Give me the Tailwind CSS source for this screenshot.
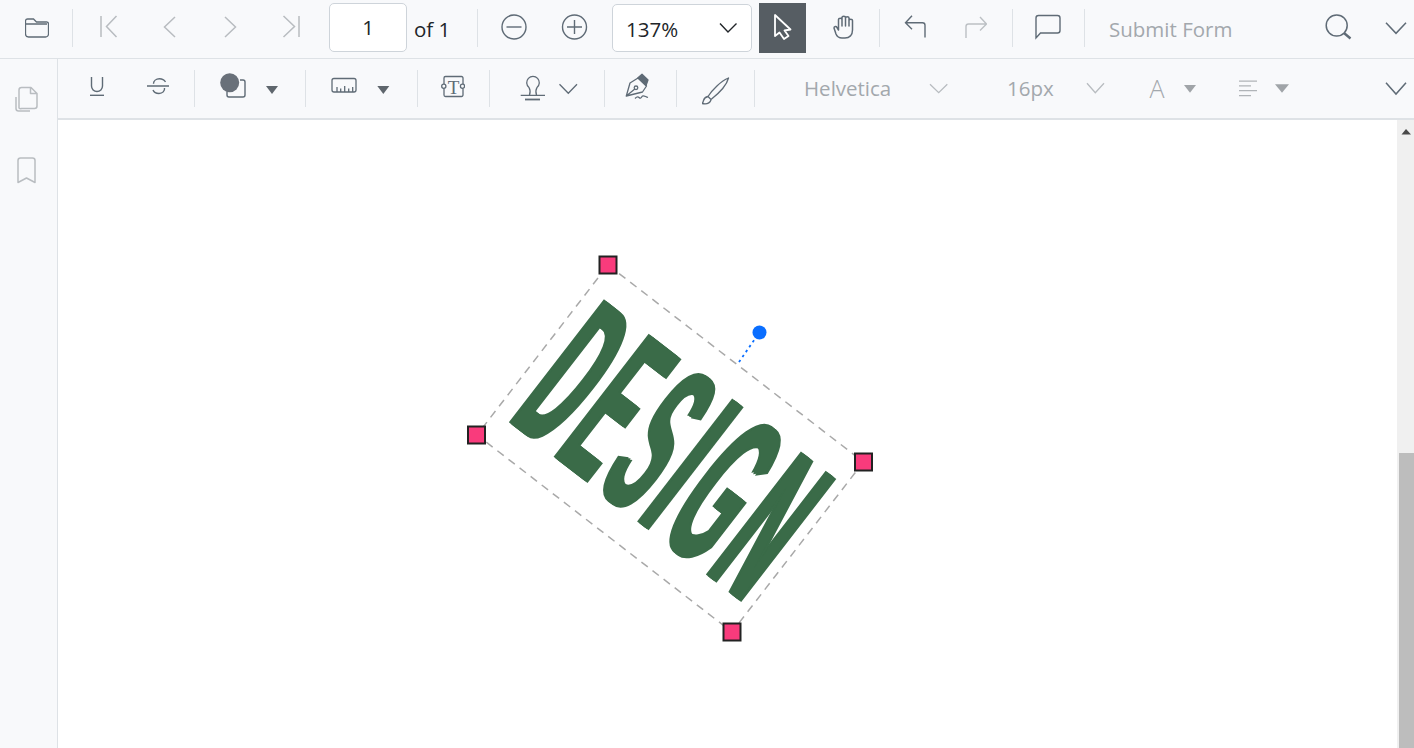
<!doctype html>
<html>
<head>
<meta charset="utf-8">
<script src="https://cdn.jsdelivr.net/npm/@tailwindcss/browser@4"></script>
</head>
<body class="bg-white">
<div class="w-[1414px] h-[748px] overflow-hidden flex flex-col font-['Open_Sans','Noto_Sans',sans-serif] text-[#212529]">
  <!-- top toolbar -->
  <div class="h-[59px] shrink-0 flex items-start bg-[#f8f9fb] border-b border-[#dee2e6] text-[20.5px]">
    <svg class="shrink-0 h-[58px] w-[24px] ml-[25px]" viewBox="25 0 24 58" fill="none" stroke="#5f6b76" stroke-width="1.3"><path d="M25.5 21 a2 2 0 0 1 2-2 h6 l3 3 h9.5 a2 2 0 0 1 2.5 2 v10 a3 3 0 0 1-3 3 h-17 a3 3 0 0 1-3-3 z M26 24 h21"/></svg>
    <div class="shrink-0 w-px h-[38px] mt-[9px] ml-[23px] bg-[#dee2e6]"></div>
    <svg class="shrink-0 h-[58px] w-[20px] ml-[27px]" viewBox="100 0 20 58" fill="none" stroke="#b8bcc0" stroke-width="1.5"><path d="M101 16 V37 M116.5 16 L106.5 26.5 L116.5 37"/></svg>
    <svg class="shrink-0 h-[58px] w-[16px] ml-[42px]" viewBox="162 0 16 58" fill="none" stroke="#b8bcc0" stroke-width="1.5"><path d="M175 17 L164.5 27 L175 37"/></svg>
    <svg class="shrink-0 h-[58px] w-[16px] ml-[44px]" viewBox="222 0 16 58" fill="none" stroke="#b8bcc0" stroke-width="1.5"><path d="M225 17 L235.5 27 L225 37"/></svg>
    <svg class="shrink-0 h-[58px] w-[18px] ml-[44px]" viewBox="282 0 18 58" fill="none" stroke="#b8bcc0" stroke-width="1.5"><path d="M299 16 V37 M283.5 16 L294.5 26.5 L283.5 37"/></svg>
    <div class="shrink-0 w-[78px] h-[49px] mt-[3px] ml-[29px] bg-white border border-[#ced4da] rounded-[5px] flex items-center justify-center">1</div>
    <div class="shrink-0 w-[37px] ml-[7px] mt-[3px] h-[49px] leading-[52px] whitespace-nowrap">of 1</div>
    <div class="shrink-0 w-px h-[38px] mt-[9px] ml-[26px] bg-[#dee2e6]"></div>
    <svg class="shrink-0 h-[58px] w-[28px] ml-[22px]" viewBox="500 0 28 58" fill="none" stroke="#5f6b76" stroke-width="1.4"><circle cx="514" cy="27" r="12"/><path d="M506.5 27 H521.5"/></svg>
    <svg class="shrink-0 h-[58px] w-[28px] ml-[32px]" viewBox="560 0 28 58" fill="none" stroke="#5f6b76" stroke-width="1.4"><circle cx="574.5" cy="27" r="12"/><path d="M567 27 H582 M574.5 20 V34"/></svg>
    <div class="shrink-0 w-[140px] h-[48px] mt-[4px] ml-[24px] bg-white border border-[#ced4da] rounded-[5px] pl-[13px] leading-[48px] relative">137%
      <svg class="absolute right-[14px] top-[17px] w-[18px] h-[12px]" viewBox="718 20 18 12" fill="none" stroke="#212529" stroke-width="1.4"><path d="M719 21.5 L727 30 L735.5 21.5"/></svg>
    </div>
    <div class="shrink-0 w-[47px] h-[50px] mt-[3px] ml-[7px] bg-[#565d63] flex items-center justify-center">
      <svg class="w-[24px] h-[30px]" viewBox="771 13 24 30" fill="#565d63" stroke="#fff" stroke-width="1.8" stroke-linejoin="round"><path d="M775 15 V36 L779.5 32.5 L784 39 L788.5 36 L784.5 30.5 L790.5 29.5 Z"/></svg>
    </div>
    <svg class="shrink-0 h-[58px] w-[24px] ml-[26px]" viewBox="832 0 24 58" fill="none" stroke="#5f6b76" stroke-width="1.5" stroke-linejoin="round"><path d="M834 28 c0-1.6 2.4-2 3-.5 l1.5 2.5 V19.500 c0-1.800 3.500-1.800 3.500 0 V26 V17.500 c0-1.800 3.500-1.800 3.500 0 V26 V18 c0-1.800 3.500-1.800 3.500 0 V26 V20.500 c0-1.800 3.500-1.800 3.500 0 V30 c0 5-3 8-7.500 8 h-3 c-3 0-5-1.500-6-4 z"/></svg>
    <div class="shrink-0 w-px h-[38px] mt-[9px] ml-[23px] bg-[#dee2e6]"></div>
    <svg class="shrink-0 h-[58px] w-[22px] ml-[24px]" viewBox="904 0 22 58" fill="none" stroke="#5f6b76" stroke-width="1.4"><path d="M912 15.700 L905.500 22.700 L912 29.300 M905.500 22.700 H922.500 a2.500 2.500 0 0 1 2.500 2.500 V37.500"/></svg>
    <svg class="shrink-0 h-[58px] w-[22px] ml-[39px]" viewBox="965 0 22 58" fill="none" stroke="#bcc0c4" stroke-width="1.4"><path d="M980 17 L986.500 24 L980 30.500 M986.500 24 H968.500 a2.500 2.500 0 0 0 -2.500 2.500 V38"/></svg>
    <div class="shrink-0 w-px h-[38px] mt-[9px] ml-[25px] bg-[#dee2e6]"></div>
    <svg class="shrink-0 h-[58px] w-[26px] ml-[22px]" viewBox="1035 0 26 58" fill="none" stroke="#5f6b76" stroke-width="1.4"><path d="M1036 38 V18 a2.500 2.500 0 0 1 2.500-2.500 h19 a2.500 2.500 0 0 1 2.500 2.500 v12.500 a2.500 2.500 0 0 1-2.500 2.500 h-17 z"/></svg>
    <div class="shrink-0 w-px h-[38px] mt-[9px] ml-[23px] bg-[#dee2e6]"></div>
    <div class="shrink-0 w-[124px] ml-[24px] mt-[3px] h-[49px] leading-[52px] text-[#a3a8ad] whitespace-nowrap">Submit Form</div>
    <svg class="shrink-0 h-[58px] w-[27px] ml-[92px]" viewBox="1325 0 27 58" fill="none" stroke="#5f6b76" stroke-width="1.5"><circle cx="1336.700" cy="25.500" r="10.500"/><path d="M1344 33 L1350.500 38.500" stroke-width="2.400"/></svg>
    <svg class="shrink-0 h-[58px] w-[22px] ml-[33px]" viewBox="1385 0 22 58" fill="none" stroke="#5f6b76" stroke-width="1.5"><path d="M1386 22.700 L1396 33.300 L1406 22.700"/></svg>
  </div>

  <div class="flex-1 flex min-h-0">
    <!-- sidebar -->
    <div class="w-[58px] shrink-0 bg-[#f8f9fb] border-r border-[#dee2e6] flex flex-col">
      <svg class="w-[57px] h-[130px]" viewBox="0 59 57 130" fill="none" stroke="#b9bdc1" stroke-width="1.5" stroke-linejoin="round">
        <path d="M19 108 V90 a2.500 2.500 0 0 1 2.500-2.500 h9.500 l6 6 V106 a2.500 2.500 0 0 1-2.500 2.500 h-13 a2.500 2.500 0 0 1-2.500-.5 z M30.500 87.500 v6 h6.500"/>
        <path d="M16 97 V108.500 a2.500 2.500 0 0 0 2.500 2.500 H30"/>
        <path d="M18 160.500 a2.500 2.500 0 0 1 2.500-2.500 h12 a2.500 2.500 0 0 1 2.500 2.500 v22 l-8.500-4.500 -8.500 4.500 z"/>
      </svg>
    </div>
    <div class="flex-1 flex flex-col min-w-0">
      <!-- second toolbar -->
      <div class="h-[61px] shrink-0 flex items-center bg-[#f8f9fb] border-b-2 border-[#dee2e6] text-[20.5px] text-[#a3a8ad]">
        <svg class="shrink-0 h-[59px] w-[24px] ml-[27px]" viewBox="85 59 24 59" fill="none" stroke="#5f6b76" stroke-width="1.4"><path d="M91.500 77 V86 a5.500 5.500 0 0 0 11 0 V77"/><path d="M90 95.300 H104"/></svg>
        <svg class="shrink-0 h-[59px] w-[24px] ml-[37px]" viewBox="146 59 24 59" fill="none" stroke="#5f6b76" stroke-width="1.4"><path d="M147 86 H169 M165.500 82 c-1.500-2.500 -3.500-3.200 -6-3.200 c-3.500 0 -6 2 -6 5 M164.500 88 c.5 3 -2 5.500 -5.500 5.500 c-3 0 -5-1 -6-3.500"/></svg>
        <div class="shrink-0 w-px h-[37px] ml-[24px] bg-[#dee2e6]"></div>
        <svg class="shrink-0 h-[59px] w-[30px] ml-[22px]" viewBox="217 59 30 59" fill="none" stroke="#5f6b76" stroke-width="1.4"><path d="M240 80 H243 a2 2 0 0 1 2 2 V95 a2 2 0 0 1-2 2 H229 a2 2 0 0 1-2-2 V92"/><circle cx="229.700" cy="82.700" r="9.500" fill="#697079" stroke="none"/></svg>
        <svg class="shrink-0 h-[59px] w-[16px] ml-[17px]" viewBox="264 59 16 59" fill="#5f666d"><path d="M266 86 H278 L272 94 Z"/></svg>
        <div class="shrink-0 w-px h-[37px] ml-[25px] bg-[#dee2e6]"></div>
        <svg class="shrink-0 h-[59px] w-[28px] ml-[24px]" viewBox="330 59 28 59" fill="none" stroke="#5f6b76" stroke-width="1.300"><rect x="332" y="78.500" width="24" height="13.500" rx="2"/><path d="M337 92 v-5 M340.700 92 v-3.500 M344.700 92 v-6 M348.700 92 v-3.500 M352.700 92 v-5"/></svg>
        <svg class="shrink-0 h-[59px] w-[16px] ml-[17px]" viewBox="375 59 16 59" fill="#5f666d"><path d="M377.300 86 H389.300 L383.300 94 Z"/></svg>
        <div class="shrink-0 w-px h-[37px] ml-[26px] bg-[#dee2e6]"></div>
        <svg class="shrink-0 h-[59px] w-[24px] ml-[23px]" viewBox="441 59 24 59" fill="none" stroke="#5f6b76" stroke-width="1.300"><path d="M444 84 V78 a1.500 1.500 0 0 1 1.500-1.500 h16 a1.500 1.500 0 0 1 1.500 1.500 V84 M444 88.500 V95 a1.500 1.500 0 0 0 1.500 1.500 h16 a1.500 1.500 0 0 0 1.500-1.500 V88.500"/><circle cx="443.800" cy="86.200" r="2.100"/><circle cx="462.500" cy="86.200" r="2.100"/><text x="453.500" y="93.500" text-anchor="middle" font-family="Liberation Serif" font-size="19" fill="#5f6b76" stroke="none">T</text></svg>
        <div class="shrink-0 w-px h-[37px] ml-[24px] bg-[#dee2e6]"></div>
        <svg class="shrink-0 h-[59px] w-[26px] ml-[30px]" viewBox="520 59 26 59" fill="none" stroke="#5f6b76" stroke-width="1.300"><path d="M529.500 95 c1-3 1-5 -.5-7.500 a6.300 6.300 0 1 1 8 0 c-1.500 2.500 -1.500 4.500 -.5 7.500 M520.700 95.300 H545"/><path d="M525 99.500 H540" stroke-width="1.800"/></svg>
        <svg class="shrink-0 h-[59px] w-[20px] ml-[12px]" viewBox="558 59 20 59" fill="none" stroke="#5f6b76" stroke-width="1.300"><path d="M559.500 84.300 L568.300 93.300 L577 84.300"/></svg>
        <div class="shrink-0 w-px h-[37px] ml-[26px] bg-[#dee2e6]"></div>
        <svg class="shrink-0 h-[59px] w-[24px] ml-[20px]" viewBox="625 59 24 59" fill="none" stroke="#5f6b76" stroke-width="1.300" stroke-linejoin="round"><path d="M626.300 96 L630 83 L638 78 L646.500 86 L642.500 92 Z M626.300 96 L634.800 89"/><circle cx="636" cy="87.800" r="1.800"/><path d="M638 77.700 L642 74.300 L648 80 L646 85.500 Z" fill="#5f6b76"/><path d="M635 98.500 c2-2 3-2 4-1 s2 1 3-1 s3 0 6 1"/></svg>
        <div class="shrink-0 w-px h-[37px] ml-[27px] bg-[#dee2e6]"></div>
        <svg class="shrink-0 h-[59px] w-[28px] ml-[25px]" viewBox="702 59 28 59" fill="none" stroke="#5f6b76" stroke-width="1.300" stroke-linejoin="round"><path d="M728.500 78 C721 81 712 90 708 96.500 l3 3 C718 94 726.500 86 728.500 78 Z"/><path d="M708 96.500 c-3 .5-4 2-4.500 4 c-.300 1.500-.800 2.500-1.500 3 c3.500 .8 7.500 .3 9-3.500"/></svg>
        <div class="shrink-0 w-px h-[37px] ml-[24px] bg-[#dee2e6]"></div>
        <div class="shrink-0 w-[87px] ml-[49px] whitespace-nowrap">Helvetica</div>
        <svg class="shrink-0 h-[59px] w-[20px] ml-[38px]" viewBox="929 59 20 59" fill="none" stroke="#b8bcc0" stroke-width="1.300"><path d="M930 84.300 L938.700 92.700 L947.300 84.300"/></svg>
        <div class="shrink-0 w-[47px] ml-[58px] whitespace-nowrap">16px</div>
        <svg class="shrink-0 h-[59px] w-[20px] ml-[32px]" viewBox="1086 59 20 59" fill="none" stroke="#b8bcc0" stroke-width="1.300"><path d="M1087 83.300 L1095.300 92.700 L1104 83.300"/></svg>
        <div class="shrink-0 w-[16px] ml-[43px] text-[25px] font-light flex justify-center">A</div>
        <svg class="shrink-0 h-[59px] w-[14px] ml-[18px]" viewBox="1183 59 14 59" fill="#a0a4a8"><path d="M1184 85 H1196 L1190 92.700 Z"/></svg>
        <svg class="shrink-0 h-[59px] w-[20px] ml-[41px]" viewBox="1238 59 20 59" fill="none" stroke="#b0b4b8" stroke-width="1.200"><path d="M1239 81.200 H1257 M1239 85.800 H1251 M1239 90.700 H1257 M1239 95.600 H1251"/></svg>
        <svg class="shrink-0 h-[59px] w-[16px] ml-[16px]" viewBox="1274 59 16 59" fill="#a0a4a8"><path d="M1275 84.300 H1289 L1282 92.700 Z"/></svg>
        <svg class="shrink-0 h-[59px] w-[22px] ml-[95px]" viewBox="1385 59 22 59" fill="none" stroke="#5f6b76" stroke-width="1.500"><path d="M1386 82.700 L1396 94 L1406 82.700"/></svg>
      </div>
      <!-- viewer -->
      <div class="flex-1 flex min-h-0">
        <div class="flex-1 relative overflow-hidden bg-white">
          <div class="absolute left-[550px] top-[145px] origin-top-left whitespace-nowrap font-['Liberation_Sans'] font-bold text-[100px] leading-none tracking-[11px] [font-kerning:none] text-[#3a6b48] [text-shadow:3.5px_0_0_#3a6b48,-3.5px_0_0_#3a6b48] [transform:rotate(37.7deg)_translate(15.500px,-7px)_scale(0.68,2.26)]">DESIGN</div>
          <svg class="absolute inset-0 w-[1339px] h-[628px]" viewBox="58 120 1339 628" fill="none">
            <path d="M608 265 L863.500 462 L732 632 L477 435 Z" stroke="#a9a9a9" stroke-width="1.500" stroke-dasharray="8 6"/>
            <path d="M739 362 L759 333" stroke="#0a6eff" stroke-width="1.800" stroke-dasharray="2.500 3.500"/>
            <circle cx="759.500" cy="332.500" r="7" fill="#0a6eff"/>
            <g fill="#f93b7c" stroke="#222" stroke-width="2">
              <rect x="599.500" y="256.500" width="17" height="17"/>
              <rect x="855" y="453.500" width="17" height="17"/>
              <rect x="723.500" y="623.500" width="17" height="17"/>
              <rect x="468" y="426.500" width="17" height="17"/>
            </g>
          </svg>
        </div>
        <div class="w-[17px] shrink-0 bg-[#f0f0f0] flex flex-col justify-between items-end">
          <svg class="w-[17px] h-[20px]" viewBox="1397 120 17 20" fill="#4a4a4a"><path d="M1401.500 134.500 L1406 129 L1411 134.500 Z"/></svg>
          <div class="w-[15px] h-[295px] bg-[#bdbdbd]"></div>
        </div>
      </div>
    </div>
  </div>
</div>
</body>
</html>
